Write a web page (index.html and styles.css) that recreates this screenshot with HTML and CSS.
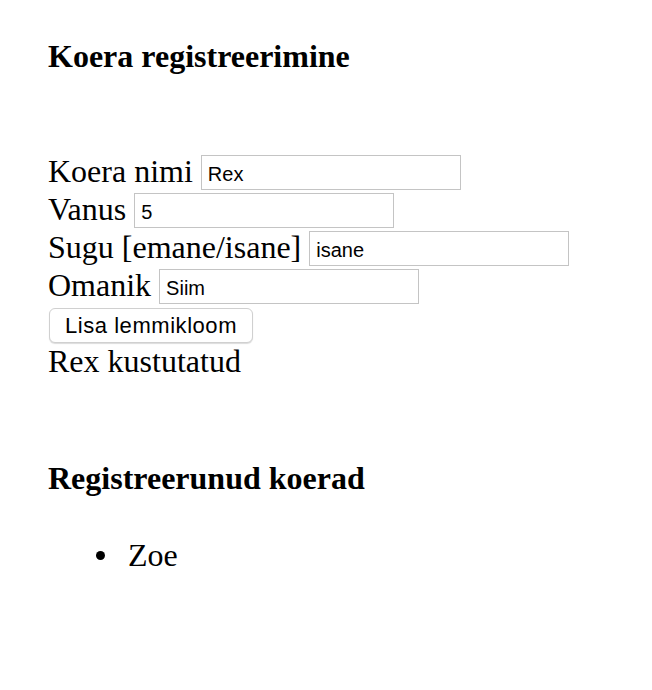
FILE: index.html
```html
<!DOCTYPE html>
<html lang="et">
<head>
<meta charset="utf-8">
<title>Koera registreerimine</title>
<link rel="stylesheet" href="styles.css">
</head>
<body>
<div class="page">
  <h4 class="title">Koera registreerimine</h4>
  <form class="form">
    <div class="row"><span class="label">Koera nimi</span><input class="field" type="text" value="Rex"></div>
    <div class="row"><span class="label">Vanus</span><input class="field" type="text" value="5"></div>
    <div class="row"><span class="label">Sugu [emane/isane]</span><input class="field" type="text" value="isane"></div>
    <div class="row"><span class="label">Omanik</span><input class="field" type="text" value="Siim"></div>
    <button class="btn" type="button">Lisa lemmikloom</button>
  </form>
  <p class="status">Rex kustutatud</p>
  <h4 class="title title-list">Registreerunud koerad</h4>
  <ul class="list">
    <li class="item">Zoe</li>
  </ul>
</div>
</body>
</html>
```
FILE: styles.css
```css
html, body {
  margin: 0;
  padding: 0;
  background: #fff;
}
body {
  font-family: "Liberation Serif", "Times New Roman", serif;
  font-size: 32px;
  color: #000;
}
.page {
  padding: 0 48px;
}
.title {
  font-size: 32px;
  font-weight: bold;
  margin: 38px 0 77px;
  line-height: 37px;
}
.form {
  margin: 0;
}
.row {
  display: flex;
  align-items: center;
  gap: 8px;
  height: 38px;
  line-height: 38px;
}
.label {
  white-space: nowrap;
}
.field {
  box-sizing: border-box;
  width: 260px;
  height: 35px;
  margin: 3px 0 0 0;
  padding: 4px 6px 0;
  border: 1px solid #c4c4c4;
  border-radius: 0;
  font-family: "Liberation Sans", Arial, sans-serif;
  font-size: 20px;
  color: #000;
  background: #fff;
  outline: none;
}
.btn {
  display: block;
  box-sizing: border-box;
  width: 204px;
  height: 35px;
  margin: 4px 0 0 1px;
  padding: 1px 0 0;
  border: 1px solid #d0d0d0;
  border-radius: 6px;
  background: #fff;
  box-shadow: 0 1px 1px rgba(0,0,0,0.14);
  font-family: "Liberation Sans", Arial, sans-serif;
  font-size: 22px;
  letter-spacing: 0.55px;
  color: #000;
}
.status {
  margin: 0;
  line-height: 37px;
}
.title-list {
  margin: 80px 0 40px;
}
.list {
  margin: 0;
  padding-left: 80px;
  line-height: 37px;
  list-style: none;
}
.item::before {
  content: "";
  display: inline-block;
  width: 9px;
  height: 9px;
  border-radius: 50%;
  background: #000;
  margin-left: -32px;
  margin-right: 23px;
  vertical-align: 6px;
}
```
